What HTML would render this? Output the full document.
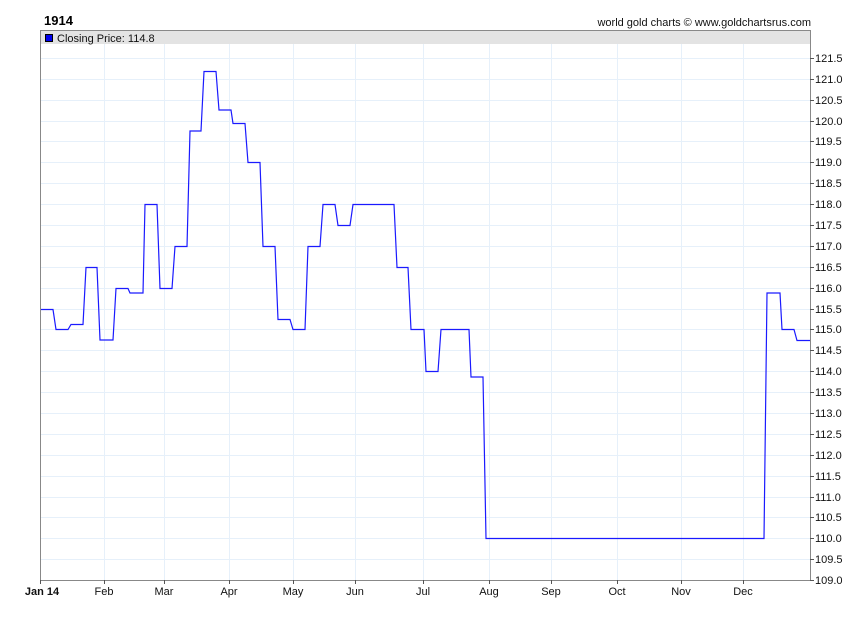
<!DOCTYPE html>
<html><head><meta charset="utf-8"><style>
body{margin:0;background:#fff;width:850px;height:616px;overflow:hidden;font-family:"Liberation Sans",Arial,sans-serif}
</style></head><body>
<svg width="850" height="616" xmlns="http://www.w3.org/2000/svg" font-family="Liberation Sans, Arial, sans-serif">
<rect x="40.5" y="30.5" width="770" height="550" fill="#fff"/>
<rect x="41" y="31" width="769" height="13" fill="#e3e3e3"/>
<g stroke="#e6f0fa" stroke-width="1">
<line x1="104.5" y1="44" x2="104.5" y2="580"/><line x1="164.5" y1="44" x2="164.5" y2="580"/><line x1="229.5" y1="44" x2="229.5" y2="580"/><line x1="293.5" y1="44" x2="293.5" y2="580"/><line x1="355.5" y1="44" x2="355.5" y2="580"/><line x1="423.5" y1="44" x2="423.5" y2="580"/><line x1="489.5" y1="44" x2="489.5" y2="580"/><line x1="551.5" y1="44" x2="551.5" y2="580"/><line x1="617.5" y1="44" x2="617.5" y2="580"/><line x1="681.5" y1="44" x2="681.5" y2="580"/><line x1="743.5" y1="44" x2="743.5" y2="580"/>
</g>
<g id="h" stroke="#e6f0fa"></g>
<g stroke="#e6f0fa">
<line x1="41" x2="810" y1="58.5" y2="58.5"/><line x1="41" x2="810" y1="79.5" y2="79.5"/><line x1="41" x2="810" y1="100.5" y2="100.5"/><line x1="41" x2="810" y1="121.5" y2="121.5"/><line x1="41" x2="810" y1="141.5" y2="141.5"/><line x1="41" x2="810" y1="162.5" y2="162.5"/><line x1="41" x2="810" y1="183.5" y2="183.5"/><line x1="41" x2="810" y1="204.5" y2="204.5"/><line x1="41" x2="810" y1="225.5" y2="225.5"/><line x1="41" x2="810" y1="246.5" y2="246.5"/><line x1="41" x2="810" y1="267.5" y2="267.5"/><line x1="41" x2="810" y1="288.5" y2="288.5"/><line x1="41" x2="810" y1="309.5" y2="309.5"/><line x1="41" x2="810" y1="329.5" y2="329.5"/><line x1="41" x2="810" y1="350.5" y2="350.5"/><line x1="41" x2="810" y1="371.5" y2="371.5"/><line x1="41" x2="810" y1="392.5" y2="392.5"/><line x1="41" x2="810" y1="413.5" y2="413.5"/><line x1="41" x2="810" y1="434.5" y2="434.5"/><line x1="41" x2="810" y1="455.5" y2="455.5"/><line x1="41" x2="810" y1="476.5" y2="476.5"/><line x1="41" x2="810" y1="497.5" y2="497.5"/><line x1="41" x2="810" y1="517.5" y2="517.5"/><line x1="41" x2="810" y1="538.5" y2="538.5"/><line x1="41" x2="810" y1="559.5" y2="559.5"/>
</g>
<polyline fill="none" stroke="#1a1aff" stroke-width="1.2" points="40,309.5 53,309.5 56,329.5 68,329.5 71,324.5 83,324.5 86,267.5 97,267.5 100,340 113,340 116,288.5 128,288.5 130,293 143,293 145,204.5 157,204.5 160,288.5 172,288.5 175,246.5 187,246.5 190,131 201,131 204,71.5 216,71.5 219,110 231,110 233,123.5 245,123.5 248,162.5 260,162.5 263,246.5 275,246.5 278,319.5 290,319.5 293,329.5 305,329.5 308,246.5 320,246.5 323,204.5 335,204.5 338,225.5 350,225.5 353,204.5 394,204.5 397,267.5 408,267.5 411,329.5 424,329.5 426,371.5 438,371.5 441,329.5 469,329.5 471,377 483,377 486,538.5 764,538.5 767,293 780,293 782,329.5 794,329.5 797,340.5 810,340.5"/>
<rect x="40.5" y="30.5" width="770" height="550" fill="none" stroke="#888"/>
<g stroke="#555">
<line x1="810" x2="814" y1="58.5" y2="58.5"/><line x1="810" x2="814" y1="79.5" y2="79.5"/><line x1="810" x2="814" y1="100.5" y2="100.5"/><line x1="810" x2="814" y1="121.5" y2="121.5"/><line x1="810" x2="814" y1="141.5" y2="141.5"/><line x1="810" x2="814" y1="162.5" y2="162.5"/><line x1="810" x2="814" y1="183.5" y2="183.5"/><line x1="810" x2="814" y1="204.5" y2="204.5"/><line x1="810" x2="814" y1="225.5" y2="225.5"/><line x1="810" x2="814" y1="246.5" y2="246.5"/><line x1="810" x2="814" y1="267.5" y2="267.5"/><line x1="810" x2="814" y1="288.5" y2="288.5"/><line x1="810" x2="814" y1="309.5" y2="309.5"/><line x1="810" x2="814" y1="329.5" y2="329.5"/><line x1="810" x2="814" y1="350.5" y2="350.5"/><line x1="810" x2="814" y1="371.5" y2="371.5"/><line x1="810" x2="814" y1="392.5" y2="392.5"/><line x1="810" x2="814" y1="413.5" y2="413.5"/><line x1="810" x2="814" y1="434.5" y2="434.5"/><line x1="810" x2="814" y1="455.5" y2="455.5"/><line x1="810" x2="814" y1="476.5" y2="476.5"/><line x1="810" x2="814" y1="497.5" y2="497.5"/><line x1="810" x2="814" y1="517.5" y2="517.5"/><line x1="810" x2="814" y1="538.5" y2="538.5"/><line x1="810" x2="814" y1="559.5" y2="559.5"/><line x1="810" x2="814" y1="580.5" y2="580.5"/>
<line x1="40.5" x2="40.5" y1="580" y2="584"/><line x1="104.5" x2="104.5" y1="580" y2="584"/><line x1="164.5" x2="164.5" y1="580" y2="584"/><line x1="229.5" x2="229.5" y1="580" y2="584"/><line x1="293.5" x2="293.5" y1="580" y2="584"/><line x1="355.5" x2="355.5" y1="580" y2="584"/><line x1="423.5" x2="423.5" y1="580" y2="584"/><line x1="489.5" x2="489.5" y1="580" y2="584"/><line x1="551.5" x2="551.5" y1="580" y2="584"/><line x1="617.5" x2="617.5" y1="580" y2="584"/><line x1="681.5" x2="681.5" y1="580" y2="584"/><line x1="743.5" x2="743.5" y1="580" y2="584"/>
</g>
<g font-size="11" fill="#111">
<text x="815" y="62">121.5</text><text x="815" y="83">121.0</text><text x="815" y="104">120.5</text><text x="815" y="125">120.0</text><text x="815" y="145">119.5</text><text x="815" y="166">119.0</text><text x="815" y="187">118.5</text><text x="815" y="208">118.0</text><text x="815" y="229">117.5</text><text x="815" y="250">117.0</text><text x="815" y="271">116.5</text><text x="815" y="292">116.0</text><text x="815" y="313">115.5</text><text x="815" y="333">115.0</text><text x="815" y="354">114.5</text><text x="815" y="375">114.0</text><text x="815" y="396">113.5</text><text x="815" y="417">113.0</text><text x="815" y="438">112.5</text><text x="815" y="459">112.0</text><text x="815" y="480">111.5</text><text x="815" y="501">111.0</text><text x="815" y="521">110.5</text><text x="815" y="542">110.0</text><text x="815" y="563">109.5</text><text x="815" y="584">109.0</text>
</g>
<g font-size="11" fill="#111" text-anchor="middle">
<text x="42" y="595" font-weight="bold">Jan 14</text><text x="104" y="595">Feb</text><text x="164" y="595">Mar</text><text x="229" y="595">Apr</text><text x="293" y="595">May</text><text x="355" y="595">Jun</text><text x="423" y="595">Jul</text><text x="489" y="595">Aug</text><text x="551" y="595">Sep</text><text x="617" y="595">Oct</text><text x="681" y="595">Nov</text><text x="743" y="595">Dec</text>
</g>
<text x="44" y="25" font-size="13" font-weight="bold" fill="#000">1914</text>
<text x="811" y="26" font-size="11" fill="#111" text-anchor="end">world gold charts © www.goldchartsrus.com</text>
<rect x="45.5" y="34.5" width="7" height="7" fill="#0000ee" stroke="#000"/>
<text x="57" y="42" font-size="11" fill="#111">Closing Price: 114.8</text>
</svg>
</body></html>
